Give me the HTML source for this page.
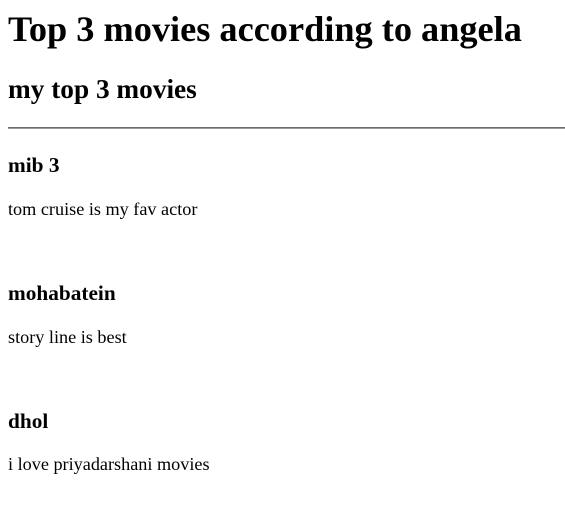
<!DOCTYPE html>
<html><head><style>
html,body{margin:0;padding:0;background:#fff;width:565px;height:507px;overflow:hidden;}
body{font-family:"Liberation Serif",serif;color:#000;position:relative;}
.a{position:absolute;left:8px;margin:0;line-height:1;white-space:nowrap;font-weight:bold;}
.p{position:absolute;left:8px;margin:0;line-height:1;font-size:18.2px;white-space:nowrap;}
.h1{font-size:36.3px;}
.h2{font-size:27.3px;}
.h3{font-size:21.3px;}
.hr{position:absolute;left:8px;width:557px;top:127px;height:0;border-top:1px solid #6e6e6e;border-bottom:1px solid #9a9a9a;}
</style></head><body>
<div class="a h1" style="top:11px">Top 3 movies according to angela</div>
<div class="a h2" style="top:75.5px">my top 3 movies</div>
<div class="hr"></div>
<div class="a h3" style="top:155px">mib 3</div>
<div class="p" style="top:200px">tom cruise is my fav actor</div>
<div class="a h3" style="top:282.5px">mohabatein</div>
<div class="p" style="top:327.5px">story line is best</div>
<div class="a h3" style="top:410.5px">dhol</div>
<div class="p" style="top:455px">i love priyadarshani movies</div>
</body></html>
